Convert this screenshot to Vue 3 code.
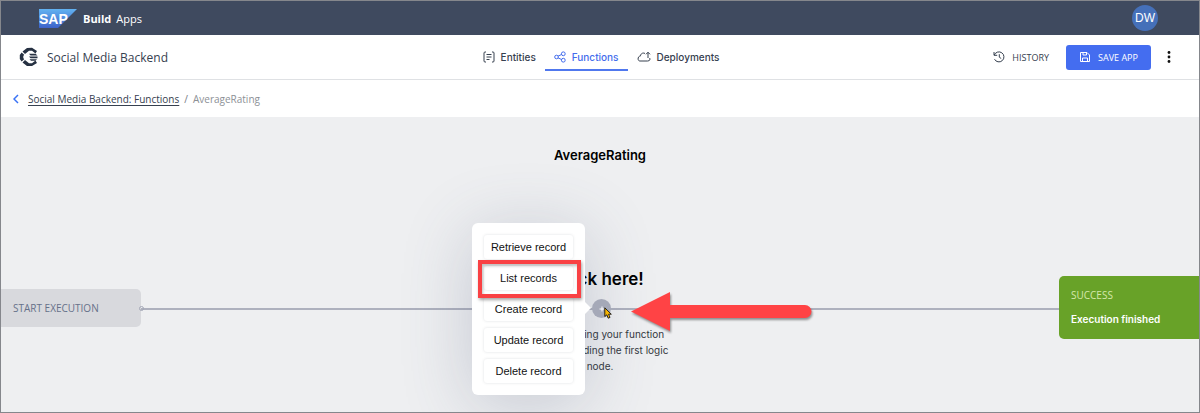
<script setup>
const records = ['Retrieve record', 'List records', 'Create record', 'Update record', 'Delete record']
</script>

<template>
  <div class="app">
    <header class="shell">
      <svg class="sap" viewBox="0 0 38 19" role="img" aria-label="SAP">
        <defs>
          <linearGradient id="sapFill" x1="0" y1="0" x2="0" y2="1">
            <stop offset="0" stop-color="#62b2f1" />
            <stop offset="1" stop-color="#3c62c9" />
          </linearGradient>
        </defs>
        <path d="M0 0H38L19 19H0Z" fill="url(#sapFill)" />
        <text x="0" y="15" class="sap-text">SAP</text>
      </svg>
      <strong class="build">Build</strong>
      <span class="apps">Apps</span>
      <button class="avatar" type="button">DW</button>
    </header>

    <div class="toolbar">
      <div class="project">
        <svg class="logo" viewBox="0 0 20 20" aria-hidden="true">
          <path d="M8 1L3.500 4.500L6 7L10 3.800H13L16.500 6.500L18 4L13 .8Z" fill="#263142" />
          <path d="M2.600 5.500L.8 8V12L2.600 14.500L5.200 12.200L4.300 11V9L5.200 7.800Z" fill="#263142" />
          <path d="M3.500 15.500L8 19H13L18 16L16.500 13.500L13 16.200H10L6 13Z" fill="#263142" />
          <path d="M10 6.800H16.500L18.500 8.600H11.500ZM10 9.500H18.500V11.300H11.500ZM10.500 12.200H18L16.500 13.800H12Z" fill="#263142" />
        </svg>
        <span class="name">Social Media Backend</span>
      </div>
      <nav class="tabs">
        <a href="#entities" class="tab">
          <svg class="icon" viewBox="0 0 12 12"><path d="M3 1H2Q1 1 1 2V10Q1 11 2 11H3M9 1H10Q11 1 11 2V10Q11 11 10 11H9M3.500 3.500H8.500M3.500 6H8.500M3.500 8.500H6.500" /></svg>
          Entities
        </a>
        <a href="#functions" class="tab active">
          <svg class="icon" viewBox="0 0 12 12"><circle cx="2.500" cy="6" r="1.800" /><circle cx="9.300" cy="2.800" r="1.900" /><circle cx="9.300" cy="9.200" r="1.900" /><path d="M4 5.200L7.500 3.500M4 6.800L7.500 8.500" /></svg>
          Functions
        </a>
        <a href="#deployments" class="tab">
          <svg class="icon wide" viewBox="0 0 14 12"><path d="M8 2.500C5.500 1.200 3.500 3 3.500 5C.5 5 .2 10 3 10H10.500C13 10 13.600 8 12.500 7M11 7V1.500M9 3.300L11 1.200L13 3.300" /></svg>
          Deployments
        </a>
      </nav>
      <div class="actions">
        <button class="history" type="button">
          <svg class="icon" viewBox="0 0 12 12"><path d="M1.300 4A5 5 0 1 1 1.500 8.200M1 1V4.300H4.200M6.300 3.200V6.200L8.200 7.500" /></svg>
          HISTORY
        </button>
        <button class="save" type="button">
          <svg class="icon" viewBox="0 0 12 12"><path d="M1.500 1.500H8L10.500 4V10.500H1.500ZM4 1.500V4H7.500V1.500M3.500 10.500V7H8.500V10.500" /></svg>
          SAVE APP
        </button>
        <button class="more" type="button" aria-label="More">
          <svg viewBox="0 0 4 12"><circle cx="2" cy="1.500" r="1.400" /><circle cx="2" cy="6" r="1.400" /><circle cx="2" cy="10.500" r="1.400" /></svg>
        </button>
      </div>
    </div>

    <div class="crumbs">
      <svg class="back" viewBox="0 0 6 10" aria-hidden="true"><path d="M5 1L1 5L5 9" /></svg>
      <a href="#functions">Social Media Backend: Functions</a>
      <span class="slash">/</span>
      <span class="current">AverageRating</span>
    </div>

    <main class="canvas">
      <h1>AverageRating</h1>
      <div class="wire"></div>
      <div class="start">START EXECUTION</div>
      <div class="port"></div>
      <div class="success">
        <span class="status">SUCCESS</span>
        <strong>Execution finished</strong>
      </div>
      <h2>Click here!</h2>
      <p class="hint">Start building your function<br />logic by adding the first logic<br />node.</p>
      <div class="popup">
        <button v-for="r in records" :key="r" type="button">{{ r }}</button>
      </div>
      <button class="plus" type="button" aria-label="Add node">
        <svg viewBox="0 0 6 6"><path d="M3 .5V5.500M.5 3H5.500" /></svg>
      </button>
      <div class="marker"></div>
      <svg class="cursor" viewBox="0 0 8 12" aria-hidden="true"><path d="M.8 .8V9.500L2.800 7.800L4.200 11.200L6 10.400L4.600 7.200H7.300Z" /></svg>
      <svg class="arrow" viewBox="0 0 184 44" aria-hidden="true"><path d="M1 21.500L40 2V15H175A6.500 6.500 0 0 1 175 28H40V41Z" /></svg>
    </main>
  </div>
</template>

<style>
body { margin: 0; }
</style>

<style scoped>
* { box-sizing: border-box; }
.app {
  display: flex;
  flex-direction: column;
  min-height: 100vh;
  border: 1px solid #85878c;
  overflow: hidden;
  font-family: "Open Sans", sans-serif;
  color: #36404f;
}
button { font-family: inherit; border: 0; padding: 0; background: none; color: inherit; cursor: pointer; }
a { color: inherit; }
.shell {
  height: 34px;
  display: flex;
  align-items: center;
  padding: 0 41px 0 38px;
  background: #3f4a5f;
  color: #fff;
  font-size: 11px;
}
.sap { width: 38px; height: 19px; }
.sap-text { font: bold 14px "Liberation Sans", sans-serif; fill: #fff; }
.build { margin-left: 6px; }
.apps { margin-left: 5px; }
.avatar {
  margin-left: auto;
  width: 26px;
  height: 26px;
  border-radius: 50%;
  background: #4570b9;
  font: 12px "Liberation Sans", sans-serif;
}
.toolbar {
  height: 45px;
  display: grid;
  grid-template-columns: 1fr auto 1fr;
  align-items: center;
  padding: 0 24px 0 18px;
  border-bottom: 1px solid #dfe1e4;
  background: #fff;
}
.project { display: flex; align-items: center; gap: 8px; }
.logo { width: 20px; height: 20px; }
.name { font-size: 12px; }
.tabs { display: flex; align-self: stretch; align-items: center; padding-left: 8px; font-family: "Inter", sans-serif; }
.tab {
  display: flex;
  align-items: center;
  gap: 6px;
  height: 26px;
  margin-top: 2px;
  padding: 0 9px;
  border-bottom: 2px solid transparent;
  font-size: 10px;
  font-weight: 500;
  text-decoration: none;
}
.tab.active { color: #436cec; border-color: #5078ee; }
.icon { width: 12px; height: 12px; fill: none; stroke: currentColor; stroke-width: 1; }
.icon.wide { width: 14px; }
.actions { display: flex; justify-content: flex-end; align-items: center; }
.history, .save { display: flex; align-items: center; justify-content: center; gap: 7px; font-size: 9px; font-weight: 500; }
.save {
  width: 85px;
  height: 25px;
  margin-left: 17px;
  border-radius: 3px;
  background: #446df0;
  color: #fff;
}
.more { width: 4px; margin-left: 16px; margin-right: 4px; line-height: 0; }
.more svg { width: 4px; height: 12px; fill: #111; }
.crumbs {
  height: 37px;
  display: flex;
  align-items: center;
  padding-left: 12px;
  background: #fff;
  font-size: 10px;
}
.back { width: 6px; height: 10px; margin-right: 9px; fill: none; stroke: #3972f5; stroke-width: 1.5; }
.crumbs a { text-underline-offset: 2px; }
.slash { margin: 0 5px; color: #73777f; }
.current { color: #8c9096; }
.canvas { position: relative; flex: 1; min-height: 295px; background: #eeeff1; font-family: "Inter", "Open Sans", sans-serif; }
h1 { margin: 0; padding-top: 29px; text-align: center; color: #000; font-size: 13px; line-height: 18px; font-weight: 600; }
.wire { position: absolute; left: 140px; right: 140px; top: 191px; height: 2px; background: #aeb1be; }
.start {
  position: absolute;
  left: 0;
  top: 172px;
  width: 140px;
  padding: 10px 12px;
  border-radius: 0 5px 5px 0;
  background: #d8d9dd;
  color: #66718a;
  font-size: 10px;
  line-height: 18px;
}
.port { position: absolute; left: 138px; top: 189px; width: 5px; height: 5px; border: 1px solid #a4a8b7; border-radius: 50%; }
.start, .status { font-family: "Open Sans", sans-serif; }
.success {
  position: absolute;
  right: 0;
  top: 159px;
  width: 140px;
  display: flex;
  flex-direction: column;
  gap: 8px;
  padding: 11px 12px 12px;
  border-radius: 5px 0 0 5px;
  background: #68a228;
  color: #fff;
  font-size: 10px;
  line-height: 16px;
}
.status { color: #d5e8ab; }
.success strong { font-weight: 600; }
h2 { position: absolute; left: 0; right: 0; top: 150px; margin: 0; text-align: center; color: #000; font-size: 17px; line-height: 24px; font-weight: 600; }
.hint { position: absolute; left: 0; right: 0; top: 209px; margin: 0; text-align: center; font-size: 10px; line-height: 16px; color: #343840; }
.popup {
  position: absolute;
  left: calc(50% - 128px);
  top: 106px;
  width: 113px;
  display: flex;
  flex-direction: column;
  gap: 7px;
  padding: 12px;
  border-radius: 6px;
  background: #fff;
  box-shadow: 0 10px 70px rgba(65, 80, 112, .24);
}
.popup::after {
  content: "";
  position: absolute;
  right: -6px;
  top: 79px;
  border: 6px solid transparent;
  border-right-width: 0;
  border-left-color: #fff;
}
.popup button {
  height: 24px;
  border-radius: 3px;
  box-shadow: 0 0 3px rgba(50, 60, 80, .16);
  color: #111;
  font: 11px "Liberation Sans", sans-serif;
}
.plus { position: absolute; left: calc(50% - 8px); top: 182px; width: 19px; height: 19px; border-radius: 50%; background: #a5a9b8; line-height: 0; }
.plus svg { width: 6px; height: 6px; stroke: #fff; fill: none; }
.marker { position: absolute; left: calc(50% - 122px); top: 143px; width: 103px; height: 38px; border: 4px solid #f94144; box-shadow: 1px 2px 3px rgba(0, 0, 0, .35), inset 1px 2px 3px rgba(0, 0, 0, .25); }
.cursor { position: absolute; left: calc(50% + 4px); top: 190px; width: 8px; height: 12px; fill: #f7b500; stroke: #25221c; stroke-width: 1; }
.arrow { position: absolute; left: calc(50% + 30px); top: 173px; width: 184px; height: 44px; fill: #ff4345; filter: drop-shadow(1px 2px 1px rgba(0, 0, 0, .4)); }
</style>
